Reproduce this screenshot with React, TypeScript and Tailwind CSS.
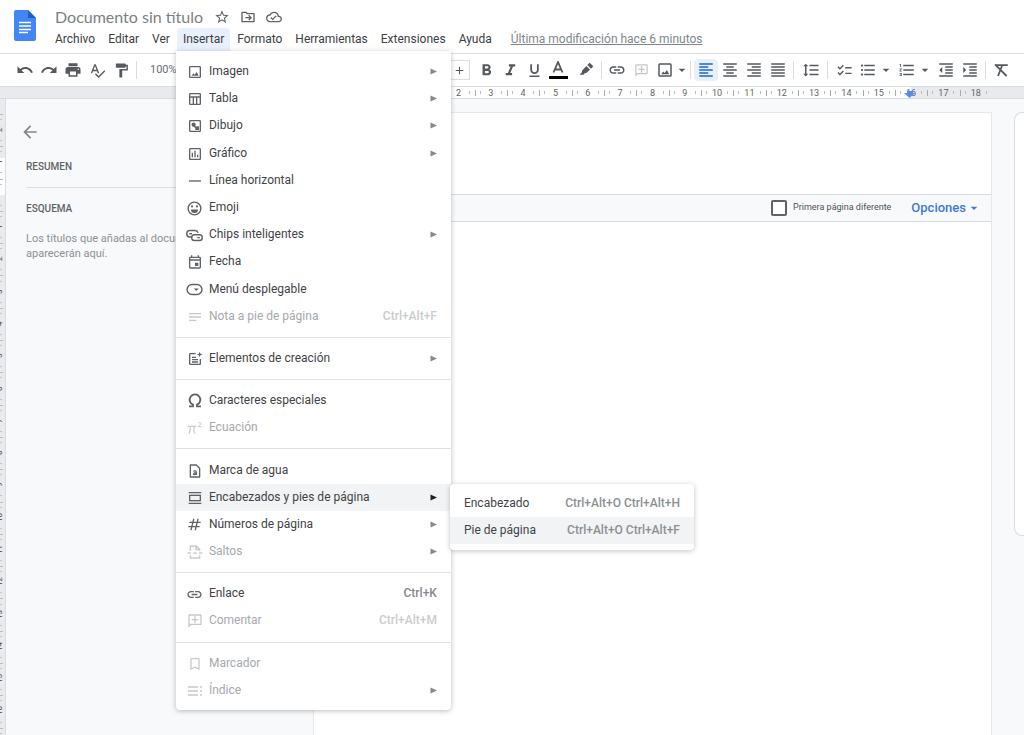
import type { ReactNode } from 'react';
import {
  MdStarOutline, MdOutlineCloudDone, MdUndo, MdRedo, MdPrint, MdSpellcheck, MdFormatPaint,
  MdFormatBold, MdFormatItalic, MdFormatUnderlined, MdLink, MdOutlineAddComment, MdAdd,
  MdFormatAlignLeft, MdFormatAlignCenter, MdFormatAlignRight, MdFormatAlignJustify,
  MdFormatLineSpacing, MdChecklist, MdFormatListBulleted, MdFormatListNumbered,
  MdFormatIndentDecrease, MdFormatIndentIncrease, MdArrowBack, MdArrowDropDown,
  MdOutlineInsertChart, MdOutlineEvent, MdBookmarkBorder, MdNumbers,
} from 'react-icons/md';

function Glyph({ size = 16, children }: { size?: number; children: ReactNode }) {
  return (
    <svg width={size} height={size} viewBox="0 0 24 24" fill="none" stroke="currentColor" strokeWidth="2" aria-hidden="true">
      {children}
    </svg>
  );
}

const ImageGlyph = ({ size = 16 }: { size?: number }) => (
  <Glyph size={size}>
    <rect x="4" y="4" width="16" height="16" rx="1" />
    <path d="M7 17.500l2.500-3.500 2 2 3-4 3 5.500z" fill="currentColor" stroke="none" />
  </Glyph>
);

const FolderMoveGlyph = () => (
  <Glyph>
    <path d="M3 5h6l2 2h10v12H3z" strokeLinejoin="round" />
    <path d="M8 13h8M13 9.5l3.5 3.5-3.5 3.5" />
  </Glyph>
);

const HighlighterGlyph = () => (
  <Glyph size={16}>
    <path d="M12.500 6l5.500 5.500L12 17l-1.500-.5L8 19H2.500L6 15.500 6 13z" fill="currentColor" stroke="none" />
    <path d="M14 4.500L17.500 1 23 6.500 19.500 10z" fill="currentColor" stroke="none" />
  </Glyph>
);

const ClearGlyph = () => (
  <Glyph size={18}>
    <path d="M5 5.500h16M13.500 6L8 20M4 4.500L19.500 20" strokeWidth="2.400" />
  </Glyph>
);

const TableGlyph = () => (
  <Glyph>
    <rect x="4" y="4" width="16" height="16" rx="1" />
    <path d="M4 9h16M9.500 9v11M14.500 9v11" />
  </Glyph>
);

const DrawingGlyph = () => (
  <Glyph>
    <rect x="4" y="4" width="16" height="16" rx="1" />
    <circle cx="10" cy="10" r="3.200" fill="currentColor" stroke="none" />
    <path d="M12.500 12.500H18V18h-5.500z" fill="currentColor" stroke="none" />
    <path d="M9 11l5 4" />
  </Glyph>
);

const LineGlyph = () => (
  <Glyph><path d="M3 12h18" /></Glyph>
);

const EmojiGlyph = () => (
  <Glyph size={17}>
    <circle cx="12" cy="12" r="9" />
    <path d="M7 13.500h10a5 5 0 0 1-10 0z" fill="currentColor" stroke="none" />
    <circle cx="8.500" cy="9" r="1.600" fill="currentColor" stroke="none" />
    <circle cx="15.500" cy="9" r="1.600" fill="currentColor" stroke="none" />
  </Glyph>
);

const ChipsGlyph = () => (
  <Glyph size={17}>
    <path d="M8 14H5.500a4.500 4.500 0 0 1 0-9H13a4.500 4.500 0 0 1 4 3" />
    <path d="M4.500 9.500h4" />
    <rect x="8" y="11" width="15" height="8" rx="4" />
    <path d="M16 15h3.500" />
  </Glyph>
);

const DropdownGlyph = () => (
  <Glyph size={17}>
    <rect x="1.500" y="5" width="21" height="14" rx="7" />
    <path d="M11 10.500h7l-3.500 3.500z" fill="currentColor" stroke="none" />
  </Glyph>
);

const NoteGlyph = () => (
  <Glyph><path d="M3 7h18M3 12h18M3 17h11" /></Glyph>
);

const BlocksGlyph = () => (
  <Glyph>
    <path d="M13 4H5a1 1 0 0 0-1 1v14a1 1 0 0 0 1 1h14a1 1 0 0 0 1-1v-7" />
    <path d="M7.500 9.500h6M7.500 13h9M7.500 16.500h9" />
    <path d="M19 1l1.200 3 3 1.200-3 1.200L19 9.500l-1.200-3.100-3-1.200 3-1.200z" fill="currentColor" stroke="none" />
  </Glyph>
);

const OmegaGlyph = () => (
  <Glyph>
    <path d="M3 20h6v-2.500a8 8 0 1 1 6 0V20h6" strokeWidth="2.800" />
  </Glyph>
);

const EquationGlyph = () => (
  <Glyph>
    <path d="M1 9.500h13M5 9.500c0 5-.5 8-2 11M10.500 9.500c-.500 5-.500 9.500 2 10.500" strokeWidth="1.800" />
    <path d="M17 5.500c0-2.500 4-2.500 4 0 0 1.500-3.500 3-4 4.500h4.500" strokeWidth="1.500" />
  </Glyph>
);

const WatermarkGlyph = () => (
  <Glyph>
    <path d="M5 3h9l5 5v13H5z" strokeLinejoin="round" />
    <path d="M9.500 12.500c1-1 4.500-1 4.500 1V18M14 14.500c-5 0-5 3-3 3 1.500 0 3-.500 3-2" strokeWidth="1.800" />
  </Glyph>
);

const HeaderFooterGlyph = () => (
  <Glyph>
    <path d="M2.500 4h19M2.500 20h19" />
    <rect x="4" y="8" width="16" height="8" />
  </Glyph>
);

const BreakGlyph = () => (
  <Glyph>
    <path d="M5 10V3h9l5 5v2M13.500 3v5.500H19M5 17v4h14v-4" />
    <path d="M1 13.500h5M9.500 13.500h5M18 13.500h5" />
  </Glyph>
);

const TocGlyph = () => (
  <Glyph>
    <path d="M1.500 6h15M1.500 12h15M1.500 18h15M19.500 6h3M19.500 12h3M19.500 18h3" />
  </Glyph>
);

const CommentGlyph = ({ size = 16 }: { size?: number }) => (
  <span className="-scale-x-100"><MdOutlineAddComment size={size} /></span>
);

type Item = { label: string; icon: ReactNode; shortcut?: string; arrow?: boolean; disabled?: boolean; active?: boolean };

const groups: Item[][] = [
  [
    { label: 'Imagen', icon: <ImageGlyph />, arrow: true },
    { label: 'Tabla', icon: <TableGlyph />, arrow: true },
    { label: 'Dibujo', icon: <DrawingGlyph />, arrow: true },
    { label: 'Gráfico', icon: <MdOutlineInsertChart size={16} />, arrow: true },
    { label: 'Línea horizontal', icon: <LineGlyph /> },
    { label: 'Emoji', icon: <EmojiGlyph /> },
    { label: 'Chips inteligentes', icon: <ChipsGlyph />, arrow: true },
    { label: 'Fecha', icon: <MdOutlineEvent size={16} /> },
    { label: 'Menú desplegable', icon: <DropdownGlyph /> },
    { label: 'Nota a pie de página', icon: <NoteGlyph />, shortcut: 'Ctrl+Alt+F', disabled: true },
  ],
  [{ label: 'Elementos de creación', icon: <BlocksGlyph />, arrow: true }],
  [
    { label: 'Caracteres especiales', icon: <OmegaGlyph /> },
    { label: 'Ecuación', icon: <EquationGlyph />, disabled: true },
  ],
  [
    { label: 'Marca de agua', icon: <WatermarkGlyph /> },
    { label: 'Encabezados y pies de página', icon: <HeaderFooterGlyph />, arrow: true, active: true },
    { label: 'Números de página', icon: <MdNumbers size={17} />, arrow: true },
    { label: 'Saltos', icon: <BreakGlyph />, arrow: true, disabled: true },
  ],
  [
    { label: 'Enlace', icon: <MdLink size={17} />, shortcut: 'Ctrl+K' },
    { label: 'Comentar', icon: <CommentGlyph />, shortcut: 'Ctrl+Alt+M', disabled: true },
  ],
  [
    { label: 'Marcador', icon: <MdBookmarkBorder size={16} />, disabled: true },
    { label: 'Índice', icon: <TocGlyph />, arrow: true, disabled: true },
  ],
];

function MenuRow({ item }: { item: Item }) {
  return (
    <div className="relative flex flex-1">
      <button
        type="button"
        disabled={item.disabled}
        className={`flex flex-1 items-center pr-3.5 pl-2.5 text-left ${item.active ? 'bg-[#f1f3f4]' : ''} ${item.disabled ? 'text-[#a5a9ad]' : 'text-[#3f4347]'}`}
      >
        <span className={`flex w-[18px] justify-center pt-px ${item.disabled ? 'text-[#c6c9cc]' : 'text-[#5f6368]'}`}>{item.icon}</span>
        <span className="flex-1 pl-[5px]">{item.label}</span>
        {item.shortcut && <span className={`font-medium ${item.disabled ? 'text-[#c9ccce]' : 'text-[#85898d]'}`}>{item.shortcut}</span>}
        {item.arrow && (
          <svg width="7" height="7" viewBox="0 0 7 7" className={item.active ? 'text-[#202124]' : 'text-[#85898d]'} aria-hidden="true">
            <path d="M0.500 0.500L7 3.500L0.500 6.500z" fill="currentColor" />
          </svg>
        )}
      </button>
      {item.active && <SubMenu />}
    </div>
  );
}

function SubMenu() {
  return (
    <div className="absolute top-0 left-[274px] z-10 w-[244px] rounded bg-white py-1.5 shadow-[0_1px_5px_rgba(60,64,67,0.32)]">
      <button type="button" className="flex h-[27px] w-full items-center justify-between px-3.5">
        <span>Encabezado</span>
        <span className="font-medium text-[#8b8f93]">Ctrl+Alt+O Ctrl+Alt+H</span>
      </button>
      <button type="button" className="flex h-[27px] w-full items-center justify-between bg-[#f1f3f4] px-3.5">
        <span>Pie de página</span>
        <span className="font-medium text-[#8b8f93]">Ctrl+Alt+O Ctrl+Alt+F</span>
      </button>
    </div>
  );
}

function InsertMenu() {
  return (
    <div className="absolute top-full -left-px z-20 flex h-[659px] w-[275px] flex-col rounded-b bg-white pt-[7px] pb-1.5 text-[#3f4347] shadow-[0_1px_5px_rgba(60,64,67,0.35)]">
      {groups.map((group, i) => [
        i > 0 && <hr key={`line-${i}`} className="my-[7px] border-t border-[#dfe1e3]" />,
        ...group.map((item) => <MenuRow key={item.label} item={item} />),
      ])}
    </div>
  );
}

function MenuBar() {
  const names = ['Archivo', 'Editar', 'Ver', 'Insertar', 'Formato', 'Herramientas', 'Extensiones', 'Ayuda'];
  return (
    <nav className="flex gap-px text-[12px] leading-[23px] text-[#3c4043]">
      {names.map((name) => (
        <div key={name} className="relative">
          <button type="button" className={`block px-1.5 ${name === 'Insertar' ? 'rounded-t-sm bg-[#e8f0fe]' : ''}`}>{name}</button>
          {name === 'Insertar' && <InsertMenu />}
        </div>
      ))}
      <a href="#historial" className="ml-3 text-[#80868b] underline">Última modificación hace 6 minutos</a>
    </nav>
  );
}

function Tool({ label, children, className = '' }: { label: string; children: ReactNode; className?: string }) {
  return (
    <button type="button" aria-label={label} className={`flex h-[22px] w-6 shrink-0 items-center justify-center rounded-sm ${className}`}>
      {children}
    </button>
  );
}

const Caret = ({ label }: { label: string }) => (
  <button type="button" aria-label={label} className="flex w-2.5 shrink-0 justify-center">
    <MdArrowDropDown size={16} className="shrink-0" />
  </button>
);

const Divider = ({ className }: { className: string }) => <span className={`h-[18px] w-px shrink-0 bg-[#dadce0] ${className}`} />;

function Toolbar() {
  return (
    <div role="toolbar" aria-label="Formato" className="flex h-[33px] items-center border-t border-[#dadce0] pl-[13px] text-[#55595e]">
      <Tool label="Deshacer"><MdUndo size={18} /></Tool>
      <Tool label="Rehacer"><MdRedo size={18} /></Tool>
      <Tool label="Imprimir"><MdPrint size={18} /></Tool>
      <Tool label="Ortografía"><MdSpellcheck size={17} /></Tool>
      <Tool label="Copiar formato"><MdFormatPaint size={17} /></Tool>
      <Divider className="mx-[3px]" />
      <button type="button" className="w-[301px] shrink-0 pl-2.5 text-left text-[11px] text-[#6a6e73]">100%</button>
      <button type="button" aria-label="Aumentar tamaño" className="mr-1 flex h-5 w-[29px] shrink-0 items-center justify-end border border-[#dadce0] pr-[3px]">
        <MdAdd size={13} />
      </button>
      <Tool label="Negrita"><MdFormatBold size={19} /></Tool>
      <Tool label="Cursiva"><MdFormatItalic size={19} /></Tool>
      <Tool label="Subrayado"><MdFormatUnderlined size={17} /></Tool>
      <Tool label="Color del texto">
        <svg width="20" height="18" viewBox="0 0 20 18" className="shrink-0" aria-hidden="true">
          <path d="M5.500 11.500L10 1l4.500 10.500M7 8.500h6" fill="none" stroke="currentColor" strokeWidth="1.800" />
          <path d="M1 15h19v3H1z" fill="#000" />
        </svg>
      </Tool>
      <Tool label="Color de resaltado" className="ml-1"><HighlighterGlyph /></Tool>
      <Divider className="mx-[3px]" />
      <Tool label="Insertar enlace"><MdLink size={18} /></Tool>
      <Tool label="Añadir comentario" className="text-[#c4c7ca]"><CommentGlyph size={15} /></Tool>
      <Tool label="Insertar imagen"><ImageGlyph size={18} /></Tool>
      <Caret label="Opciones de imagen" />
      <Divider className="mx-[3px]" />
      <Tool label="Alinear a la izquierda" className="bg-[#e8f0fe] text-[#1967d2]"><MdFormatAlignLeft size={18} /></Tool>
      <Tool label="Centrar"><MdFormatAlignCenter size={18} /></Tool>
      <Tool label="Alinear a la derecha"><MdFormatAlignRight size={18} /></Tool>
      <Tool label="Justificar"><MdFormatAlignJustify size={18} /></Tool>
      <Divider className="mr-[5px] ml-[3px]" />
      <Tool label="Interlineado"><MdFormatLineSpacing size={18} /></Tool>
      <Divider className="mx-1" />
      <Tool label="Lista de comprobación"><MdChecklist size={17} /></Tool>
      <span className="flex items-center gap-px">
        <Tool label="Lista con viñetas"><MdFormatListBulleted size={18} /></Tool>
        <Caret label="Opciones de viñetas" />
      </span>
      <span className="ml-1 flex items-center gap-px">
        <Tool label="Lista numerada"><MdFormatListNumbered size={18} /></Tool>
        <Caret label="Opciones de numeración" />
      </span>
      <Tool label="Reducir sangría" className="ml-1"><MdFormatIndentDecrease size={18} /></Tool>
      <Tool label="Aumentar sangría"><MdFormatIndentIncrease size={18} /></Tool>
      <Divider className="mx-[3px]" />
      <Tool label="Borrar formato"><ClearGlyph /></Tool>
    </div>
  );
}

function RulerCell({ n }: { n: number }) {
  let tone = n < 0 || n > 16 ? 'bg-[#e8eaed]' : 'bg-white';
  if (n === 0) tone = 'bg-linear-to-r from-[#e8eaed] from-50% to-white to-50%';
  if (n === 16) tone = 'bg-linear-to-r from-white from-50% to-[#e8eaed] to-50%';
  return (
    <div className={`relative flex flex-1 items-center justify-between ${tone}`}>
      <span className="h-1.5 w-px bg-[#a8abae]" />
      <span className="h-[3px] w-px bg-[#b9bcbf]" />
      <span className="w-3 pt-0.5 text-center">{n === 0 ? '' : Math.abs(n)}</span>
      <span className="h-[3px] w-px bg-[#b9bcbf]" />
      <span className="w-px" />
      {n === 16 && (
        <svg width="11" height="7" viewBox="0 0 11 7" className="absolute top-1 left-[9px]" aria-hidden="true">
          <path d="M3 0h5v2h3L5.500 7 0 2h3z" fill="#4285f4" fillOpacity="0.900" />
        </svg>
      )}
    </div>
  );
}

function TopRuler() {
  return (
    <div className="flex h-[13px] border-y border-[#dadce0] bg-[#e8eaed] pr-8 pl-[313px] text-[9px] leading-none text-[#5f6368]">
      {Array.from({ length: 21 }, (_, i) => <RulerCell key={i} n={i - 2} />)}
    </div>
  );
}

function sideTone(n: number) {
  if (n === -1) return 'bg-linear-to-b from-[#e8eaed] from-35% to-white to-35%';
  if (n === 0) return 'bg-linear-to-b from-white from-50% to-[#e8eaed] to-50%';
  return '';
}

function SideRuler() {
  return (
    <div className="w-1.5 shrink-0 overflow-hidden border-r border-[#dadce0] bg-[#e8eaed] pt-[15px] text-[8px] leading-[8px] text-[#3c4043]">
      <div className="flex h-[646px] flex-col">
        {Array.from({ length: 20 }, (_, i) => i - 2).map((n) => (
          <div key={n} className={`flex flex-1 flex-col items-start justify-between ${sideTone(n)}`}>
            <span className="h-px w-[3px] bg-[#b9bcbf]" />
            <span className="h-px w-0.5 bg-[#c4c7ca]" />
            <span className="-ml-1 flex h-3 rotate-180 items-center justify-center [writing-mode:vertical-rl]">{n === 0 ? '' : Math.abs(n)}</span>
            <span className="h-px w-0.5 bg-[#c4c7ca]" />
            <span className="h-px" />
          </div>
        ))}
      </div>
    </div>
  );
}

export default function App() {
  return (
    <div className="flex h-screen flex-col overflow-hidden bg-[#f8f9fb] font-['Roboto','Liberation_Sans',sans-serif]">
      <header className="relative z-10 flex h-[53px] shrink-0 bg-white">
        <svg width="22" height="31" viewBox="0 0 22 31" className="mt-2.5 ml-3.5 shrink-0" aria-hidden="true">
          <path d="M2 0h12l8 8v21a2 2 0 0 1-2 2H2a2 2 0 0 1-2-2V2a2 2 0 0 1 2-2z" fill="#4285f4" />
          <path d="M14 0l8 8h-8z" fill="#1f5fc4" />
          <path d="M5 12.500h12M5 16h12M5 19.500h12M5 22.500h9" stroke="#fff" strokeWidth="1.500" />
        </svg>
        <div className="ml-[13px] pt-[5px]">
          <div className="flex h-[23px] items-center gap-2.5 pl-1.5 text-[#5f6368]">
            <h1 className="mr-px font-['Lato','Roboto',sans-serif] text-[16px] text-[#7b7f83]">Documento sin título</h1>
            <button type="button" aria-label="Destacar"><MdStarOutline size={16} /></button>
            <button type="button" aria-label="Mover"><FolderMoveGlyph /></button>
            <button type="button" aria-label="Estado del documento"><MdOutlineCloudDone size={16} /></button>
          </div>
          <MenuBar />
        </div>
      </header>
      <div className="shrink-0 bg-white">
        <Toolbar />
        <TopRuler />
      </div>
      <div className="flex min-h-0 flex-1">
        <SideRuler />
        <aside className="w-[307px] shrink-0 px-5 pt-[23px]">
          <button type="button" aria-label="Cerrar esquema" className="-ml-1.5 block text-[#80868b]"><MdArrowBack size={20} /></button>
          <h2 className="mt-4 text-[10px] leading-[18px] font-medium text-[#5f6368]">RESUMEN</h2>
          <hr className="mt-[11px] border-t border-[#dadce0]" />
          <h2 className="mt-3 text-[10px] leading-[18px] font-medium text-[#5f6368]">ESQUEMA</h2>
          <p className="mt-[13px] max-w-[220px] text-[11px] leading-[15px] text-[#8c9094]">
            Los títulos que añadas al documento aparecerán aquí.
          </p>
        </aside>
        <main className="mt-[13px] flex-1 border-x border-t border-[#e6e8ea] bg-white">
          <div className="h-[81px]" />
          <div className="flex h-7 items-center justify-end border-y border-[#dadce0] bg-[#f8f9fb] pr-[9px]">
            <label className="flex items-center gap-1.5 text-[9px] text-[#4d5156]">
              <input type="checkbox" className="size-4 appearance-none rounded-xs border-2 border-[#5f6368] bg-white" />
              Primera página diferente
            </label>
            <button type="button" className="ml-5 flex items-center text-[13px] font-medium text-[#3f78d8]">
              Opciones
              <MdArrowDropDown size={16} />
            </button>
          </div>
        </main>
        <aside className="mt-[13px] ml-[22px] h-[424px] w-2.5 shrink-0 rounded-l-lg border border-r-0 border-[#dadce0] bg-white" />
      </div>
    </div>
  );
}
